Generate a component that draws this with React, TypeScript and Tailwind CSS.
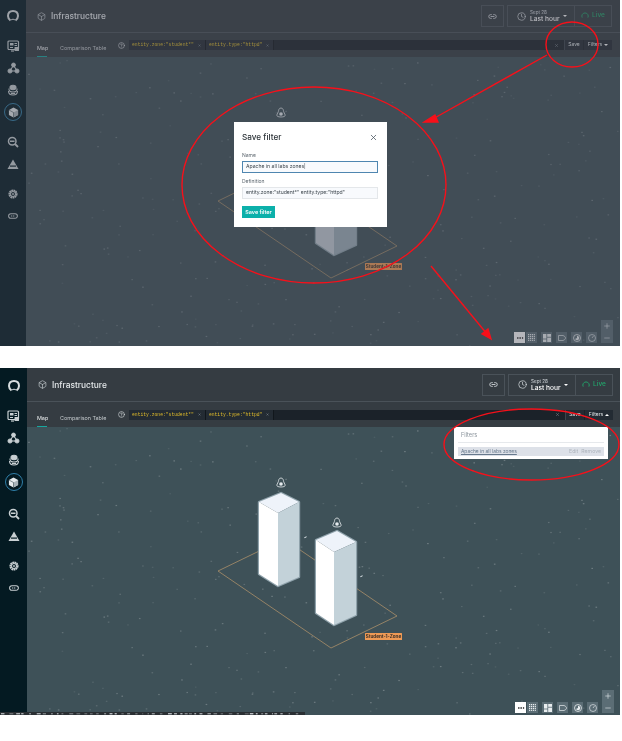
import React from "react";
import { Box, Link2, Clock, X, CircleHelp, Plus, Minus, Ellipsis } from "lucide-react";

const FONT = "[font-family:Inter,sans-serif]";

function dots() {
  const out: { x: number; y: number; o: number }[] = [];
  let s = 7919;
  const r = () => {
    s = (s * 16807) % 2147483647;
    return s / 2147483647;
  };
  for (let i = 0; i < 300; i++) {
    out.push({ x: 28 + r() * 592, y: 60 + r() * 286, o: 0.08 + r() * 0.17 });
  }
  return out;
}
const DOTS = dots();

function specks() {
  const out: { x: number; w: number; o: number }[] = [];
  let s = 104729;
  const r = () => {
    s = (s * 16807) % 2147483647;
    return s / 2147483647;
  };
  let x = 1;
  while (x < 300) {
    const w = 1 + r() * 3;
    out.push({ x, w, o: 0.25 + r() * 0.6 });
    x += w + 1 + r() * 5;
  }
  return out;
}
const SPECKS = specks();

function Lock({ x, y }: { x: number; y: number }) {
  return (
    <g transform={`translate(${x} ${y})`} fill="none" stroke="#e6ebee" strokeWidth="0.8">
      <path d="M0 -5 C2 -5 2.4 -3 2.6 -1.5 L4.2 2 C4.4 3.2 3 4 0 4 C-3 4 -4.4 3.2 -4.2 2 L-2.6 -1.5 C-2.4 -3 -2 -5 0 -5 Z" />
      <circle cx="0" cy="1" r="1.8" fill="#e6ebee" stroke="none" />
    </g>
  );
}

function Building({ pts, dim }: { pts: number[]; dim: boolean }) {
  const [tx, ty, lx, ly, rx, ry, cx, cy, bx, by, lbx, lby, rbx, rby] = pts;
  return (
    <g>
      <path d={`M${tx} ${ty} L${rx} ${ry} L${rbx} ${rby} L${bx} ${by} L${lbx} ${lby} L${lx} ${ly} Z`} fill="none" stroke="#8fa2ab" strokeWidth="2.4" strokeLinejoin="round" />
      <path d={`M${tx} ${ty} L${rx} ${ry} L${cx} ${cy} L${lx} ${ly} Z`} fill={dim ? "#cfd6de" : "#eef3fa"} />
      <path d={`M${lx} ${ly} L${cx} ${cy} L${bx} ${by} L${lbx} ${lby} Z`} fill={dim ? "#c4ccd4" : "#ffffff"} />
      <path d={`M${cx} ${cy} L${rx} ${ry} L${rbx} ${rby} L${bx} ${by} Z`} fill={dim ? "#9dadb8" : "#c3d2d9"} />
    </g>
  );
}

function Scene({ dim }: { dim: boolean }) {
  return (
    <svg className="absolute left-0 top-0" width="620" height="347" viewBox="0 0 620 347">
      {DOTS.map((d, i) => (
        <rect key={i} x={d.x} y={d.y} width="1.6" height="1.2" fill="#ffffff" opacity={d.o} />
      ))}
      <g transform={dim ? "translate(0 -2)" : "translate(0 0)"}>
        <path d="M218 203 L284 171 L397 248 L331 280 Z" fill="none" stroke="#ab8f69" strokeWidth="0.8" />
        <Lock x={281} y={115} />
        <Lock x={337} y={155} />
        <Building dim={dim} pts={[281, 125, 259, 134, 299, 134, 278, 145, 278, 218, 259, 206, 299, 209]} />
        <rect x="304" y="169" width="2.5" height="1" fill="#dfe6ea" transform="rotate(-30 305 169)" />
        <Building dim={dim} pts={[337, 163, 316, 172, 356, 174, 334, 184, 334, 257, 316, 245, 356, 247]} />
        <rect x="360" y="208" width="2.5" height="1" fill="#dfe6ea" transform="rotate(-30 361 208)" />
        <rect x="365" y="265" width="37" height="7" rx="0.6" fill="#ee9a55" />
        <text x="383.5" y="270.4" textAnchor="middle" fontSize="4.6" fontWeight="700" fontFamily="Inter, sans-serif" fill="#3a2f28">Student-1-Zone</text>
      </g>
    </svg>
  );
}

const G = "#c9d0d3";

function Logo() {
  return (
    <svg width="12" height="12" viewBox="0 0 24 24" fill="none" stroke="#d9dee0" strokeWidth="4">
      <path d="M7 21 C3 18 2 15 2 12 C2 6 6 2 12 2 C18 2 22 6 22 12 C22 15 21 18 17 21" />
      <path d="M8 20 C10 18 14 18 16 20" strokeWidth="2" />
    </svg>
  );
}
function IcMonitor() {
  return (
    <svg width="13" height="12" viewBox="0 0 26 24" fill="none" stroke={G} strokeWidth="2.4">
      <rect x="2" y="2" width="21" height="17" rx="2" />
      <rect x="6" y="6" width="7" height="5" fill={G} stroke="none" />
      <path d="M15 7 H20 M15 11 H20 M6 15 H12" strokeWidth="2" />
      <rect x="15" y="14" width="9" height="8" rx="1" fill={G} stroke="none" />
      <path d="M8 22 H14" />
    </svg>
  );
}
function IcNetwork() {
  return (
    <svg width="13" height="12" viewBox="0 0 26 24" fill={G} stroke={G} strokeWidth="1.6">
      <path d="M13 7 L6 17 M13 7 L20 17 M6 18 H20" fill="none" strokeWidth="2.2" />
      <circle cx="13" cy="6" r="4" />
      <circle cx="6" cy="18" r="4.2" />
      <circle cx="20" cy="18" r="4.2" />
    </svg>
  );
}
function IcLayers() {
  return (
    <svg width="12" height="12" viewBox="0 0 24 24" fill="none" stroke={G} strokeWidth="2.2">
      <ellipse cx="12" cy="7" rx="6" ry="4.5" fill={G} />
      <path d="M4 9 C3 14 7 16 12 16 C17 16 21 14 20 9" />
      <path d="M3 14 C3 19 7 22 12 22 C17 22 21 19 21 14" />
      <path d="M8 19 H16" />
    </svg>
  );
}
function IcHex() {
  return (
    <svg width="11" height="11" viewBox="0 0 24 24">
      <path d="M12 1 L22 6.5 V17.5 L12 23 L2 17.5 V6.5 Z" fill="#e7ebed" />
      <path d="M12 12 L22 6.5 V17.5 L12 23 Z" fill="#aab4b9" />
      <path d="M12 12 L2 6.5 M12 12 V23" stroke="#041a22" strokeWidth="1" fill="none" />
    </svg>
  );
}
function IcSearch() {
  return (
    <svg width="12" height="12" viewBox="0 0 24 24" fill="none" stroke={G} strokeWidth="3">
      <circle cx="10.5" cy="10.5" r="7.5" />
      <path d="M6 10.5 H15" strokeWidth="3" />
      <path d="M16 16 L22 22" strokeWidth="3.6" />
    </svg>
  );
}
function IcWarn() {
  return (
    <svg width="12" height="11" viewBox="0 0 24 22">
      <path d="M12 1 L23 20 H1 Z" fill={G} />
      <rect x="6" y="13" width="12" height="2.4" fill="#041a22" />
    </svg>
  );
}
function IcGear() {
  return (
    <svg width="10" height="10" viewBox="0 0 24 24" fill="none" stroke={G}>
      <circle cx="12" cy="12" r="8.5" strokeWidth="5" strokeDasharray="4 1" />
      <circle cx="12" cy="12" r="6" strokeWidth="2.4" />
      <circle cx="12" cy="12" r="2.2" fill={G} stroke="none" />
    </svg>
  );
}
function IcLink() {
  return (
    <svg width="10" height="6" viewBox="0 0 24 14" fill="none" stroke={G} strokeWidth="2.6">
      <rect x="1.5" y="1.5" width="21" height="11" rx="5.5" />
      <path d="M7 7 H17" strokeDasharray="3 1.6" />
    </svg>
  );
}

function Sidebar({ top }: { top: boolean }) {
  const cell = "h-[22px] flex items-center justify-center";
  return (
    <aside className={top ? "relative w-[26px] shrink-0 bg-[#041a22] pt-[5px] flex flex-col" : "relative w-[27px] shrink-0 bg-[#041a22] pt-[7px] mb-[3px] flex flex-col"}>
      <div className={cell}><Logo /></div>
      <div className={`${cell} mt-[8px]`}><IcMonitor /></div>
      <div className={cell}><IcNetwork /></div>
      <div className={cell}><IcLayers /></div>
      <div className={cell}>
        <div className="w-[18px] h-[18px] rounded-full border border-[#2f7fa8] flex items-center justify-center">
          <IcHex />
        </div>
      </div>
      <div className={`${cell} ${top ? "mt-[8px]" : "mt-[10px]"}`}><IcSearch /></div>
      <div className={cell}><IcWarn /></div>
      <div className={`${cell} mt-[8px]`}><IcGear /></div>
      <div className={cell}><IcLink /></div>
    </aside>
  );
}

function Chip({ k, v }: { k: string; v: string }) {
  return (
    <span className="flex items-center h-full bg-[#232b33] border-r border-[#11171c] pl-[3px] pr-[4px] gap-[4px] [font-family:'Liberation_Mono',monospace] text-[4.7px] text-[#e2bd2a] whitespace-nowrap">
      <span>{k}:{v}</span>
      <X className="w-[3px] h-[3px] text-[#9aa3aa]" strokeWidth={3} />
    </span>
  );
}

function Ctl({ children, active }: { children: React.ReactNode; active?: boolean }) {
  return (
    <div className={active ? "w-[11px] h-[11px] bg-white flex items-center justify-center" : "w-[11px] h-[11px] bg-[#5b6d75] flex items-center justify-center"}>
      {children}
    </div>
  );
}

const CG = "#e8edef";

function CtlGrid() {
  return (
    <svg width="7" height="7" viewBox="0 0 7 7" fill={CG}>
      {[0, 1, 2, 3].map((r) => [0, 1, 2, 3].map((c) => <rect key={`${r}${c}`} x={c * 1.9} y={r * 1.9} width="1.2" height="1.2" />))}
    </svg>
  );
}
function CtlLayout() {
  return (
    <svg width="8" height="8" viewBox="0 0 8 8" fill={CG}>
      <rect x="0" y="0" width="3.4" height="4.6" />
      <rect x="4.2" y="0" width="3.8" height="2.8" />
      <rect x="0" y="5.4" width="3.4" height="2.6" />
      <rect x="4.2" y="3.6" width="3.8" height="4.4" />
    </svg>
  );
}
function CtlTag() {
  return (
    <svg width="8" height="6" viewBox="0 0 16 12" fill="none" stroke={CG} strokeWidth="1.4">
      <path d="M1 1 H10 C13 2 15 4 15 6 C15 8 13 10 10 11 H1 Z" />
    </svg>
  );
}
function CtlPie() {
  return (
    <svg width="8" height="8" viewBox="0 0 16 16" fill="none" stroke={CG} strokeWidth="1.6">
      <circle cx="8" cy="8" r="7" />
      <path d="M8 3.5 A4.5 4.5 0 1 1 4 10.2 L8 8 Z" fill={CG} stroke="none" />
    </svg>
  );
}
function CtlClock() {
  return (
    <svg width="8" height="8" viewBox="0 0 16 16" fill="none" stroke={CG} strokeWidth="1.3">
      <circle cx="8" cy="8" r="7" />
      <path d="M8 8 L11 4" />
    </svg>
  );
}

function Screen({ top }: { top: boolean }) {
  return (
    <section className={top ? `relative flex w-[620px] h-[346px] overflow-hidden bg-[#3e5158] ${FONT}` : `relative flex w-[620px] h-[347px] overflow-hidden bg-[#3e5158] ${FONT}`}>
      <Scene dim={top} />
      <Sidebar top={top} />
      <div className="relative flex-1 min-w-0 flex flex-col">
        <header className={top ? "h-[33px] shrink-0 bg-[#353c42] border-b border-[#4a5259] flex items-center pl-[11px] pr-[8px]" : "h-[34px] shrink-0 bg-[#353c42] border-b border-[#4a5259] flex items-center pl-[11px] pr-[7px]"}>
          <Box className="w-[9px] h-[9px] text-[#c5ccd0]" strokeWidth={1.8} />
          <h1 className={top ? "ml-[5px] text-[8.4px] font-medium text-[#e4e8ea]" : "ml-[5px] mt-[1px] text-[8.4px] font-medium text-[#e4e8ea]"}>Infrastructure</h1>
          <div className="ml-auto flex items-center h-[22px] text-white">
            <button className="w-[23px] h-full border border-[#4a5259] flex items-center justify-center">
              <Link2 className="w-[9px] h-[9px] text-[#dde2e5]" strokeWidth={2.2} />
            </button>
            <button className="ml-[3px] w-[68px] h-full border border-[#4a5259] flex items-center pl-[9px] pr-[7px]">
              <Clock className="w-[9px] h-[9px] text-[#dde2e5]" strokeWidth={1.8} />
              <span className="ml-[4px] flex flex-col items-start leading-[6px]">
                <span className="text-[4.6px] text-[#d5dade]">Sept 28</span>
                <span className="text-[6.6px] font-medium text-white">Last hour</span>
              </span>
              <span className="ml-auto w-0 h-0 border-x-[2px] border-x-transparent border-t-[2px] border-t-white" />
            </button>
            <button className="w-[37px] h-full border border-l-0 border-[#4a5259] flex items-center justify-center gap-[3px] text-[6.6px] font-medium text-[#23a36b]">
              <svg width="8" height="8" viewBox="0 0 10 10" fill="none" stroke="#23a36b" strokeWidth="1.2"><path d="M1.5 7 A4 4 0 1 1 8.6 7" /></svg>
              Live
            </button>
          </div>
        </header>
        <div className={top ? "h-[24px] shrink-0 bg-[#353c42] flex items-center pl-[11px] pr-[8px] text-[5.4px]" : "h-[25px] shrink-0 bg-[#353c42] flex items-center pl-[10px] pr-[7px] text-[5.4px]"}>
          <div className="relative h-full w-[23px] flex items-center pt-[7px] text-[#eef1f2]">
            Map
            <span className="absolute left-0 bottom-0 w-[10px] h-[1px] bg-[#18a69e]" />
          </div>
          <div className="w-[58px] h-full flex items-center pt-[7px] text-[#c4cacd] whitespace-nowrap">Comparison Table</div>
          <CircleHelp className="w-[7px] h-[7px] text-[#dfe4e6]" strokeWidth={2} />
          <div className="ml-[4px] flex-1 h-[10px] bg-[#1b2229] flex items-center">
            <Chip k="entity.zone" v={'"student*"'} />
            <Chip k="entity.type" v={'"httpd"'} />
            <X className="ml-auto w-[5px] h-[5px] text-[#8c959b]" strokeWidth={2} />
            <span className="ml-[5px] h-full w-[19px] border-l border-[#3b444c] bg-[#232b33] flex items-center justify-center text-[5px] text-[#dfe4e6]">Save</span>
            <span className="ml-[1px] h-full w-[28px] bg-[#232b33] flex items-center justify-center gap-[2px] text-[5px] text-[#dfe4e6]">
              Filters
              <span className={top ? "w-0 h-0 border-x-[2px] border-x-transparent border-t-[2px] border-t-white" : "w-0 h-0 border-x-[2px] border-x-transparent border-b-[2px] border-b-white"} />
            </span>
          </div>
        </div>
        <div className="relative flex-1">
          <div className={top ? "absolute bottom-[3px] right-[7px] flex items-end gap-[4px]" : "absolute bottom-[2px] right-[6px] flex items-end gap-[4px]"}>
            <div className="flex gap-[1px]">
              <Ctl active><Ellipsis className="w-[8px] h-[8px] text-[#333]" strokeWidth={3} /></Ctl>
              <Ctl><CtlGrid /></Ctl>
            </div>
            <Ctl><CtlLayout /></Ctl>
            <Ctl><CtlTag /></Ctl>
            <Ctl><CtlPie /></Ctl>
            <Ctl><CtlClock /></Ctl>
            <div className="flex flex-col bg-[#5b6d75]">
              <div className="w-[12px] h-[12px] flex items-center justify-center"><Plus className="w-[8px] h-[8px] text-[#e8edef]" strokeWidth={1.8} /></div>
              <div className="w-[12px] h-[11px] flex items-center justify-center"><Minus className="w-[8px] h-[8px] text-[#e8edef]" strokeWidth={1.8} /></div>
            </div>
          </div>
        </div>
      </div>

      {!top && (
        <>
          <div className="absolute left-[454px] top-[59px] w-[154px] h-[32px] bg-white px-[4px] text-[5.2px]">
            <div className="h-[16px] flex items-center pt-[2px] px-[3px] border-b border-[#e6e9ec] text-[#8a939b] text-[5.6px]">Filters</div>
            <div className="mt-[4px] h-[9px] bg-[#dde1e8] flex items-center px-[3px]">
              <span className="text-[#66788c] underline text-[4.9px]">Apache in all labs zones</span>
              <span className="ml-auto text-[#aeb5bd]">Edit</span>
              <span className="ml-[3px] text-[#aeb5bd]">Remove</span>
            </div>
          </div>
          <div className="absolute left-0 bottom-0 w-[305px] h-[3px] bg-[#2a2f33]">
            <svg width="305" height="3" viewBox="0 0 305 3">
              {SPECKS.map((p, i) => (
                <rect key={i} x={p.x} y="1" width={p.w} height="1.4" fill="#d5dade" opacity={p.o} />
              ))}
            </svg>
          </div>
        </>
      )}

      {top && (
        <>
          <div className="absolute inset-0 bg-[#464955]/40" />
          <div className="absolute left-[234px] top-[122px] w-[153px] h-[105px] bg-white pl-[8px] pr-[9px] pt-[9px]">
            <div className="flex items-center justify-between h-[12px]">
              <h2 className="text-[8.2px] font-medium text-[#2c3338]">Save filter</h2>
              <X className="w-[9px] h-[9px] text-[#46525c]" strokeWidth={2} />
            </div>
            <label className="block mt-[9px] text-[5px] leading-[7px] text-[#5c666e]">Name</label>
            <div className="mt-[2px] h-[12px] bg-[#f8fafd] border border-[#4f86b0] flex items-center pl-[3px] text-[5.1px] text-[#3c454c]">Apache in all labs zones|</div>
            <label className="block mt-[5px] text-[5px] leading-[7px] text-[#5c666e]">Definition</label>
            <div className="mt-[2px] h-[12px] bg-[#f8fafd] border border-[#e4e7ea] flex items-center pl-[3px] text-[5.1px] text-[#3c454c]">entity.zone:"student*" entity.type:"httpd"</div>
            <button className="block mt-[7px] w-[33px] h-[12px] bg-[#0cb0aa] text-white text-[5.4px] font-semibold">Save filter</button>
          </div>
        </>
      )}

      {top && (
        <svg className="absolute left-0 top-0" width="620" height="346" viewBox="0 0 620 346" fill="none" stroke="#f7101a" strokeWidth="1.4">
          <ellipse cx="314" cy="185" rx="132" ry="98" />
          <ellipse cx="572" cy="44.5" rx="26" ry="22.5" />
          <path d="M547 55 L431 120" />
          <path d="M424 122 L435 115 L438 122 Z" fill="#f7101a" />
          <path d="M431 266 L487 334" />
          <path d="M491 339 L482 334 L488 329 Z" fill="#f7101a" />
        </svg>
      )}
      {!top && (
        <svg className="absolute left-0 top-0" width="620" height="347" viewBox="0 0 620 347" fill="none" stroke="#f7101a" strokeWidth="1.4">
          <ellipse cx="531.5" cy="76.5" rx="87.5" ry="35.5" />
        </svg>
      )}
    </section>
  );
}

export default function App() {
  return (
    <div className="w-[622px] h-[741px] bg-white overflow-hidden blur-[0.3px]">
      <Screen top />
      <div className="h-[22px]" />
      <Screen top={false} />
    </div>
  );
}
